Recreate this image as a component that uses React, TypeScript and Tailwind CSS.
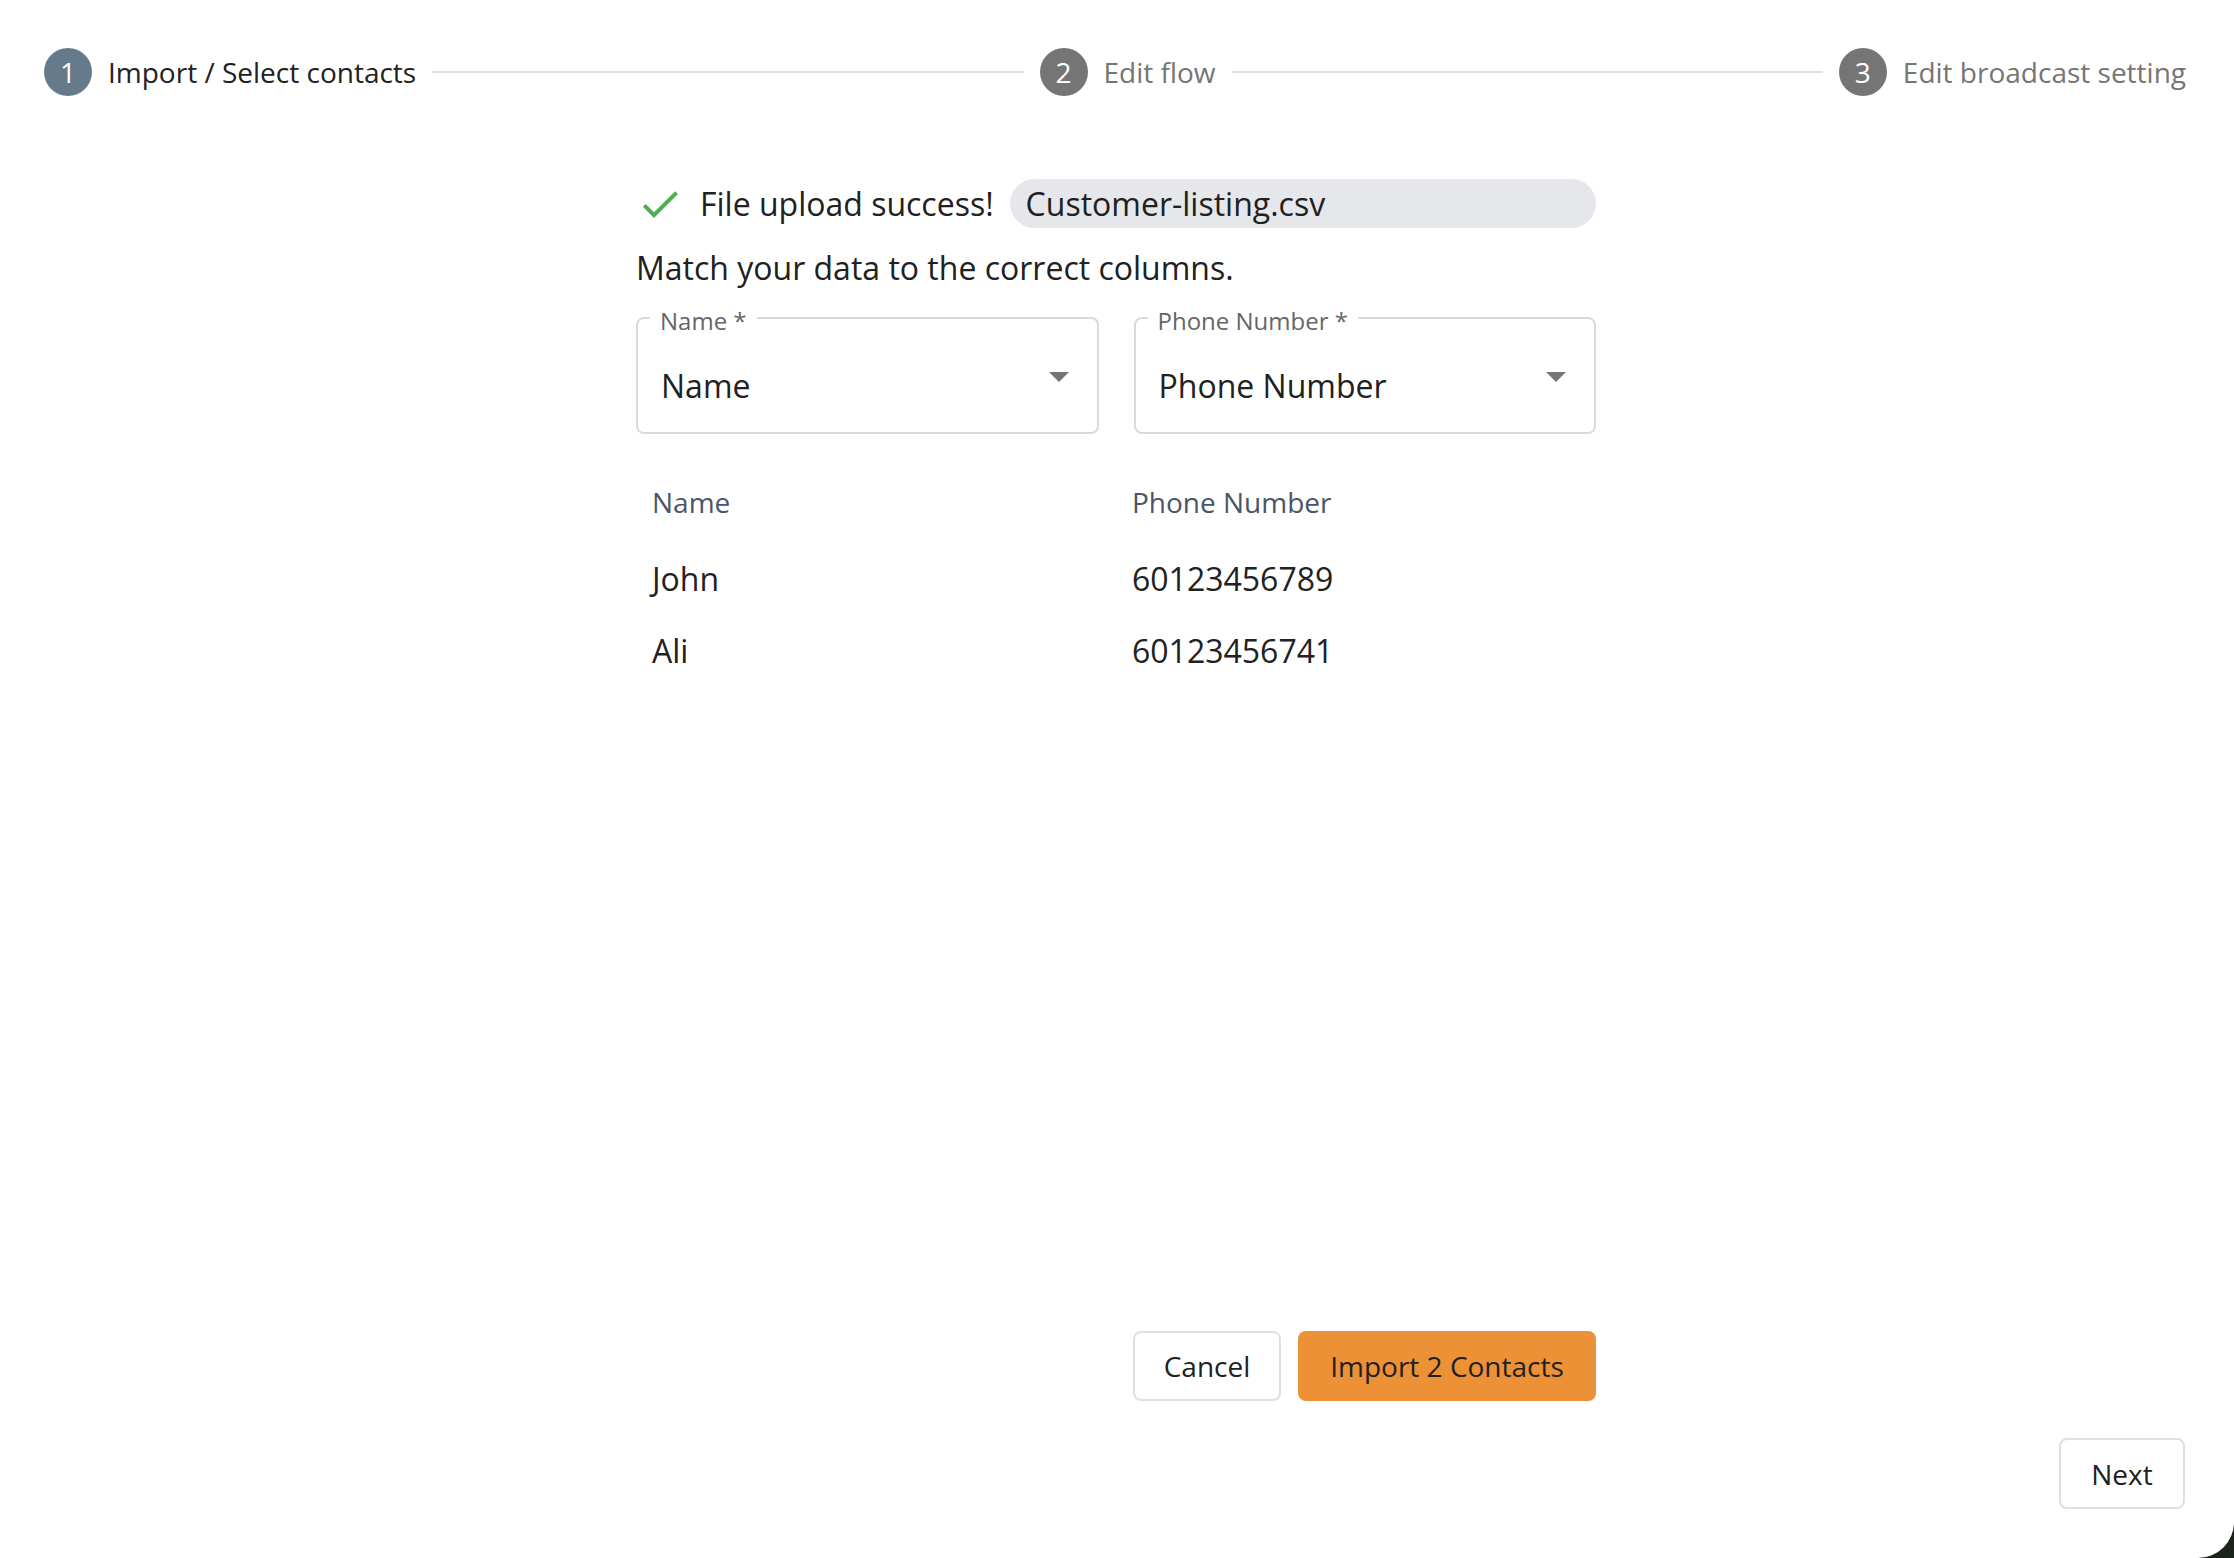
import { FC, Fragment } from "react";

const steps = [
    { n: 1, label: "Import / Select contacts", active: true },
    { n: 2, label: "Edit flow", active: false },
    { n: 3, label: "Edit broadcast setting", active: false },
];

const rows = [
    { name: "John", phone: "60123456789" },
    { name: "Ali", phone: "60123456741" },
];

const Step: FC<{ n: number; label: string; active: boolean }> = ({ n, label, active }) => (
    <div className="flex items-center gap-4">
        <div
            className={`flex h-[48px] w-[48px] items-center justify-center rounded-full text-[28px] leading-none text-white ${
                active ? "bg-[#657b8b]" : "bg-[#757575]"
            }`}
        >
            {n}
        </div>
        <span className={`text-[28px] leading-[40px] ${active ? "text-[#212121]" : "text-[#757575]"}`}>{label}</span>
    </div>
);

const ArrowDrop: FC = () => (
    <svg width="20" height="10" viewBox="7 10 10 5" className="fill-[#757575]">
        <path d="M7 10l5 5 5-5z" />
    </svg>
);

const SelectField: FC<{ label: string; value: string }> = ({ label, value }) => (
    <div className="relative flex h-[117px] items-start justify-between rounded-[8px] border-2 border-[#dadada] pl-[23px] pr-[28px] pt-[51px]">
        {/* notched label */}
        <span className="absolute -top-[10px] left-[12px] bg-white px-[10px] text-[24px] leading-none text-[#666666]">
            {label} *
        </span>
        <span className="text-[32px] leading-none text-[#212121]">{value}</span>
        <div className="mt-[2px]">
            <ArrowDrop />
        </div>
    </div>
);

export default function App() {
    return (
        <div className="min-h-screen bg-[#1c231c]" style={{ fontFamily: '"Open Sans", "Noto Sans", sans-serif' }}>
            <div className="flex h-screen flex-col rounded-br-[36px] bg-white">
                {/* Stepper */}
                <div className="flex items-center pl-[44px] pr-[48px] pt-[48px]">
                    {steps.map((s, i) => (
                        <Fragment key={s.n}>
                            {i > 0 && <div className="mx-4 h-[2px] flex-1 bg-[#e0e0e0]" />}
                            <Step {...s} />
                        </Fragment>
                    ))}
                </div>

                {/* Content */}
                <div className="ml-[636px] mt-[83px] flex w-[960px] flex-1 flex-col">
                    <div className="flex h-[49px] items-center gap-4">
                        <svg width="48" height="48" viewBox="0 0 24 24" className="fill-[#4caf50]">
                            <path d="M9 16.17 4.83 12l-1.42 1.41L9 19 21 7l-1.41-1.41z" />
                        </svg>
                        <span className="text-[32px] leading-none text-[#212121]">File upload success!</span>
                        <div className="flex h-[49px] flex-1 items-center rounded-full bg-[#e5e7eb] px-4">
                            <span className="text-[32px] leading-none text-[#212121]">Customer-listing.csv</span>
                        </div>
                    </div>

                    <p className="mt-[16px] text-[32px] leading-[48px] text-[#212121]">Match your data to the correct columns.</p>

                    <div className="mt-[25px] grid grid-cols-2 gap-[35px]">
                        <SelectField label="Name" value="Name" />
                        <SelectField label="Phone Number" value="Phone Number" />
                    </div>

                    {/* Preview table */}
                    <div className="mt-[31px]">
                        <div className="grid h-[78px] grid-cols-2 items-center pb-[4px]">
                            <span className="pl-4 text-[28px] leading-none text-[#4a5568]">Name</span>
                            <span className="pl-4 text-[28px] leading-none text-[#4a5568]">Phone Number</span>
                        </div>
                        {rows.map((r) => (
                            <div key={r.phone} className="grid h-[72px] grid-cols-2 items-center">
                                <span className="pl-4 text-[32px] leading-none text-[#212121]">{r.name}</span>
                                <span className="pl-4 text-[32px] leading-none text-[#212121]">{r.phone}</span>
                            </div>
                        ))}
                    </div>

                    <div className="mt-auto flex justify-end gap-[17px]">
                        <button className="h-[70px] w-[148px] rounded-[8px] border-2 border-[#e0e0e0] bg-white text-[28px] text-[#212121]">
                            Cancel
                        </button>
                        <button className="h-[70px] w-[298px] rounded-[8px] bg-[#ec9135] text-[28px] text-[#212121]">
                            Import 2 Contacts
                        </button>
                    </div>
                </div>

                {/* Footer */}
                <div className="flex justify-end pb-[49px] pr-[49px] pt-[37px]">
                    <button className="h-[71px] w-[126px] rounded-[8px] border-2 border-[#e0e0e0] bg-white text-[28px] text-[#212121]">
                        Next
                    </button>
                </div>
            </div>
        </div>
    );
}
